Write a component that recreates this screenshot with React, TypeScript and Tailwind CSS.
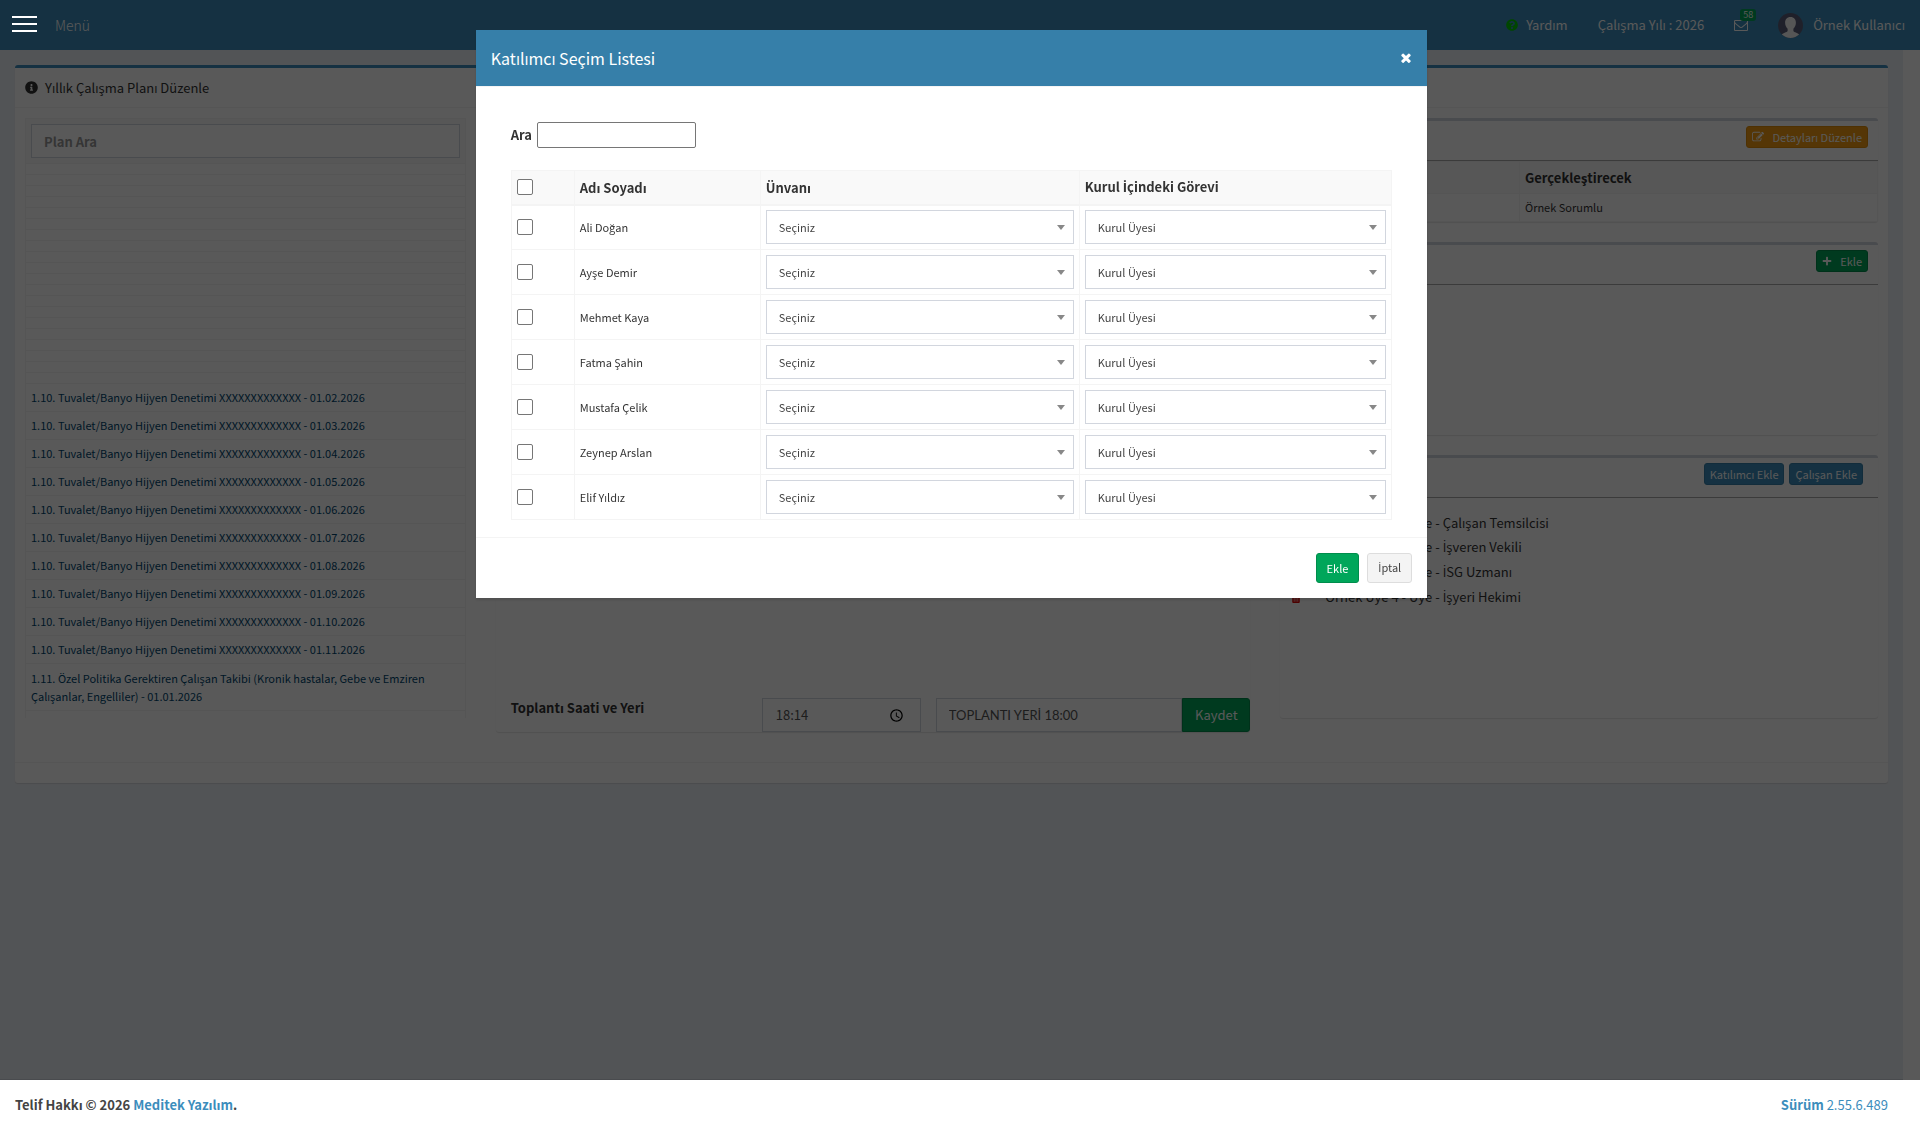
import type { ReactNode } from 'react';
import { FaInfoCircle, FaPlus, FaQuestionCircle, FaTrashAlt } from 'react-icons/fa';

const people = [
  'Ali Doğan',
  'Ayşe Demir',
  'Mehmet Kaya',
  'Fatma Şahin',
  'Mustafa Çelik',
  'Zeynep Arslan',
  'Elif Yıldız',
];

const months = ['02', '03', '04', '05', '06', '07', '08', '09', '10', '11'];

const members = [
  'Örnek Üye 1 - Üye - Çalışan Temsilcisi',
  'Örnek Üye 2 - Üye - İşveren Vekili',
  'Örnek Üye 3 - Üye - İSG Uzmanı',
  'Örnek Üye 4 - Üye - İşyeri Hekimi',
];

// The main font has no dotted capital I, so that letter comes from Open Sans.
function Dotted({ text }: { text: string }) {
  return (
    <span>
      {text.split('İ').map((part, i) => (
        <span key={i}>
          {i > 0 && <span className="font-['Open_Sans',sans-serif]">İ</span>}
          {part}
        </span>
      ))}
    </span>
  );
}

function EnvelopeIcon() {
  return (
    <svg viewBox="0 0 1792 1792" className="size-3.5" fill="currentColor">
      <path d="M1664 1504v-768q-32 36-69 66-268 206-426 338-51 43-83 67t-86.500 48.500-102.500 24.500h-2q-48 0-102.500-24.500t-86.500-48.500-83-67q-158-132-426-338-37-30-69-66v768q0 13 9.500 22.500t22.500 9.500h1472q13 0 22.500-9.500t9.500-22.500zm0-1051v-24.500l-.500-13-3-12.500-5.500-9-9-7.500-14-2.500h-1472q-13 0-22.500 9.500t-9.500 22.500q0 168 147 284 193 152 401 317 6 5 35 29.500t46 37.500 44.500 31.500 50.500 27.500 43 9h2q20 0 43-9t50.500-27.500 44.500-31.500 46-37.500 35-29.500q208-165 401-317 54-43 100.500-115.500t46.500-131.500zm128-37v1088q0 66-47 113t-113 47h-1472q-66 0-113-47t-47-113v-1088q0-66 47-113t113-47h1472q66 0 113 47t47 113z" />
    </svg>
  );
}

function EditIcon() {
  return (
    <svg viewBox="0 0 1792 1792" className="size-3" fill="currentColor">
      <path d="M888 1184l116-116-152-152-116 116v56h96v96h56zm440-720q-16-16-33 1l-350 350q-17 17-1 33t33-1l350-350q17-17 1-33zm80 594v190q0 119-84.500 203.500t-203.500 84.500h-832q-119 0-203.500-84.500t-84.500-203.500v-832q0-119 84.500-203.500t203.500-84.500h832q63 0 117 25 15 7 18 23 3 17-9 29l-49 49q-14 14-32 8-23-6-45-6h-832q-66 0-113 47t-47 113v832q0 66 47 113t113 47h832q66 0 113-47t47-113v-126q0-13 9-22l64-64q15-15 35-7t20 29zm-96-738l288 288-672 672h-288v-288zm444 132l-92 92-288-288 92-92q28-28 68-28t68 28l152 152q28 28 28 68t-28 68z" />
    </svg>
  );
}

function CloseIcon() {
  return (
    <svg viewBox="300 300 1192 1256" className="size-2.5" fill="currentColor">
      <path d="M1490 1322q0 40-28 68l-136 136q-28 28-68 28t-68-28l-294-294-294 294q-28 28-68 28t-68-28l-136-136q-28-28-28-68t28-68l294-294-294-294q-28-28-28-68t28-68l136-136q28-28 68-28t68 28l294 294 294-294q28-28 68-28t68 28l136 136q28 28 28 68t-28 68l-294 294 294 294q28 28 28 68z" />
    </svg>
  );
}

function ClockIcon() {
  return (
    <svg viewBox="0 0 24 24" className="size-[15px] text-black" fill="currentColor">
      <path d="M12 2C6.500 2 2 6.500 2 12s4.500 10 10 10 10-4.500 10-10S17.500 2 12 2zm0 18c-4.400 0-8-3.600-8-8s3.600-8 8-8 8 3.600 8 8-3.600 8-8 8zm.500-13H11v6l5.200 3.200.800-1.300-4.500-2.700V7z" />
    </svg>
  );
}

function Avatar() {
  return (
    <svg viewBox="0 0 25 25" className="size-[25px] rounded-full">
      <rect width="25" height="25" fill="#5b5d78" />
      <path
        d="M12.500 4c-3.600 0-5.400 2.500-5.400 5.700 0 2.400 1 4.600 2.500 6v2.300c-.5 1.400-5.300 1.600-6 4.500L6 25h13l2.500-2.500c-.8-2.900-5.600-3.100-6.100-4.500v-2.300c1.500-1.400 2.500-3.600 2.500-6C17.900 6.500 16.100 4 12.500 4z"
        fill="#f5f5f5"
      />
    </svg>
  );
}

function Header() {
  return (
    <header className="flex h-[50px] items-center justify-between bg-[#3c8dbc] pr-[15px] pl-[55px] text-[13px] text-white">
      <span className="text-sm font-light">Menü</span>
      <nav className="flex items-center">
        <a href="#" className="flex items-center gap-2">
          <FaQuestionCircle className="size-3 text-[#00c800]" />
          Yardım
        </a>
        <a href="#" className="ml-[30px]">
          Çalışma Yılı : 2026
        </a>
        <a href="#" aria-label="Mesajlar" className="relative ml-[30px]">
          <EnvelopeIcon />
          <span className="absolute -top-[9px] left-[6px] h-3 w-4 rounded-[3px] bg-[#00a65a] text-center text-[9px] leading-3">
            58
          </span>
        </a>
        <a href="#" className="ml-[30px] flex items-center gap-2.5">
          <Avatar />
          Örnek Kullanıcı
        </a>
      </nav>
    </header>
  );
}

function PlanList() {
  return (
    <div className="h-[600px] overflow-hidden">
      <table className="w-full border-collapse border border-[#f4f4f4] text-[11px] leading-[17px] text-[#00466e]">
        <thead>
          <tr>
            <th className="bg-[#f9f9f9] px-[5px] py-[5px]">
              <input
                aria-label="Plan Ara"
                placeholder="Plan Ara"
                className="block h-[34px] w-full border border-[#d2d6de] bg-white px-3 text-[13px] font-bold placeholder:text-[#999]"
              />
            </th>
          </tr>
        </thead>
        <tbody>
          {Array.from({ length: 20 }, (_, i) => (
            <tr key={i}>
              <td className="h-[11px] border border-[#f4f4f4] p-0" />
            </tr>
          ))}
          {months.map((m) => (
            <tr key={m}>
              <td className="border border-[#f4f4f4] p-[5px]">
                <a href="#">1.10. Tuvalet/Banyo Hijyen Denetimi XXXXXXXXXXXXX - 01.{m}.2026</a>
              </td>
            </tr>
          ))}
          <tr>
            <td className="border border-[#f4f4f4] p-[5px] leading-[18px]">
              <a href="#">
                1.11. Özel Politika Gerektiren Çalışan Takibi (Kronik hastalar, Gebe ve Emziren Çalışanlar,
                Engelliler) - 01.01.2026
              </a>
            </td>
          </tr>
          <tr>
            <td className="h-[11px] border border-[#f4f4f4] p-0" />
          </tr>
        </tbody>
      </table>
    </div>
  );
}

function MeetingPanel() {
  return (
    <div className="flex h-[614px] flex-col justify-end rounded-[3px] border-t-[3px] border-[#d2d6de] bg-white pl-[15px] shadow-[0_1px_1px_rgba(0,0,0,0.1)]">
      <div className="flex items-center">
        <label htmlFor="time" className="w-[251px] pb-3.5 text-[13px] font-bold text-[#333]">
          Toplantı Saati ve Yeri
        </label>
        <div className="flex h-[34px] w-[159px] items-center justify-between border border-[#d2d6de] pr-4 pl-[13px]">
          <input id="time" defaultValue="18:14" className="w-20 text-[13px] text-[#555]" />
          <ClockIcon />
        </div>
        <input
          aria-label="Toplantı Yeri"
          defaultValue="TOPLANTI YERİ 18:00"
          className="ml-[15px] h-[34px] min-w-0 flex-1 border border-[#d2d6de] px-3 font-['Lato','Open_Sans',sans-serif] text-[13px] text-[#555]"
        />
        <button className="h-[34px] w-[68px] rounded-r-[3px] border border-[#008d4c] bg-[#00a65a] text-[13px] text-white">
          Kaydet
        </button>
      </div>
    </div>
  );
}

type PanelProps = { tools: ReactNode; className: string; children?: ReactNode };

function Panel({ tools, className, children }: PanelProps) {
  return (
    <section
      className={`rounded-[3px] border-t-[3px] border-[#d2d6de] bg-white shadow-[0_1px_1px_rgba(0,0,0,0.1)] ${className}`}
    >
      <div className="flex h-10 justify-end gap-[5px] border-b border-[#a8a8a8] pt-[5px] text-[11px] text-white">
        {tools}
      </div>
      {children}
    </section>
  );
}

function SidePanels() {
  return (
    <div className="flex flex-col gap-5">
      <Panel
        className="h-[104px]"
        tools={
          <button className="mr-2.5 flex h-[22px] items-center gap-2 rounded-[3px] border border-[#e08e0b] bg-[#f39c12] px-[5px]">
            <EditIcon />
            Detayları Düzenle
          </button>
        }
      >
        <table className="w-full border-collapse border border-[#f4f4f4] text-[#333]">
          <thead>
            <tr className="h-8 bg-[#f9f9f9] text-left text-[13px]">
              <th className="w-2/5 border border-[#f4f4f4] p-0" />
              <th className="border border-[#f4f4f4] px-[5px]">Gerçekleştirecek</th>
            </tr>
          </thead>
          <tbody>
            <tr className="h-7 text-[11px]">
              <td className="border border-[#f4f4f4]" />
              <td className="border border-[#f4f4f4] px-[5px]">Örnek Sorumlu</td>
            </tr>
          </tbody>
        </table>
      </Panel>
      <Panel
        className="h-[193px]"
        tools={
          <button className="mr-2.5 flex h-[22px] items-center gap-2 rounded-[3px] border border-[#008d4c] bg-[#00a65a] px-[5px]">
            <FaPlus className="size-2.5" />
            Ekle
          </button>
        }
      />
      <Panel
        className="h-[263px]"
        tools={
          <>
            <button className="h-[22px] rounded-[3px] border border-[#367fa9] bg-[#3c8dbc] px-[5px]">
              Katılımcı Ekle
            </button>
            <button className="mr-[15px] h-[22px] rounded-[3px] border border-[#367fa9] bg-[#3c8dbc] px-[5px]">
              Çalışan Ekle
            </button>
          </>
        }
      >
        <ul className="pt-3 pl-[11px] text-[13px] text-[#333]">
          {members.map((m) => (
            <li key={m} className="flex h-[25px] items-center gap-6">
              <FaTrashAlt className="size-2.5 text-[#dd0000]" />
              <Dotted text={m} />
            </li>
          ))}
        </ul>
      </Panel>
    </div>
  );
}

function SelectBox({ label, value }: { label: string; value: string }) {
  return (
    <div className="relative">
      <select
        aria-label={label}
        className="block h-[34px] w-full appearance-none border border-[#d2d6de] bg-white px-3 text-[11px] text-[#444]"
      >
        <option>{value}</option>
      </select>
      <svg viewBox="0 0 8 5" className="pointer-events-none absolute top-[15px] right-[9px] h-[5px] w-2" fill="#888">
        <path d="M0 0h8L4 5z" />
      </svg>
    </div>
  );
}

const cell = 'border border-[#f4f4f4] px-[5px]';
const headCell = 'border border-b-2 border-[#f4f4f4] px-[5px]';
const box = 'block size-4 appearance-none rounded-[2px] border border-[#767676] bg-white';

function ParticipantDialog() {
  return (
    <div role="dialog" aria-label="Katılımcı Seçim Listesi" className="w-1/2 bg-white shadow-[0_2px_3px_rgba(0,0,0,0.125)]">
      <div className="flex h-14 items-center justify-between bg-[#367fa9] pr-4 pl-[15px] text-white">
        <h4 className="text-base">Katılımcı Seçim Listesi</h4>
        <button aria-label="Kapat">
          <CloseIcon />
        </button>
      </div>
      <div className="border-t border-[#f4f4f4] px-[35px] pt-[35px] pb-[17px]">
        <div className="flex items-center gap-[5px]">
          <label htmlFor="search" className="text-[13px] font-bold">
            Ara
          </label>
          <input id="search" className="h-[26px] w-[159px] rounded-[2px] border border-[#767676] px-1 text-[13px]" />
        </div>
        <table className="mt-[22px] w-full table-fixed border-collapse border border-[#f4f4f4]">
          <colgroup>
            <col className="w-[63px]" />
            <col className="w-[186px]" />
            <col className="w-[319px]" />
            <col />
          </colgroup>
          <thead>
            <tr className="h-[34px] bg-[#f9f9f9] text-left text-[13px]">
              <th className={headCell}>
                <input type="checkbox" aria-label="Tümünü Seç" className={box} />
              </th>
              <th className={headCell}>Adı Soyadı</th>
              <th className={headCell}>Ünvanı</th>
              <th className={headCell}>
                <Dotted text="Kurul İçindeki Görevi" />
              </th>
            </tr>
          </thead>
          <tbody>
            {people.map((name) => (
              <tr key={name} className="h-[45px] text-[11px]">
                <td className={cell}>
                  <input type="checkbox" aria-label={name} className={box} />
                </td>
                <td className={cell}>{name}</td>
                <td className={cell}>
                  <SelectBox label="Ünvanı" value="Seçiniz" />
                </td>
                <td className={cell}>
                  <SelectBox label="Kurul İçindeki Görevi" value="Kurul Üyesi" />
                </td>
              </tr>
            ))}
          </tbody>
        </table>
      </div>
      <div className="flex justify-end gap-2 border-t border-[#f4f4f4] p-[15px] text-[11px]">
        <button className="h-[30px] rounded-[3px] border border-[#008d4c] bg-[#00a65a] px-2.5 text-white">Ekle</button>
        <button className="h-[30px] rounded-[3px] border border-[#ddd] bg-[#f4f4f4] px-2.5 text-[#444]">
          <Dotted text="İptal" />
        </button>
      </div>
    </div>
  );
}

export default function App() {
  return (
    <div className="flex min-h-screen flex-col bg-white font-['Noto_Sans_CJK_SC','Open_Sans',sans-serif] text-[#333]">
      <Header />
      <main className="mr-[17px] flex-1 border-b border-[#d2d6de] bg-[#ecf0f5] p-[15px]">
        <div className="rounded-[3px] border-t-[3px] border-[#3c8dbc] bg-white shadow-[0_1px_1px_rgba(0,0,0,0.1)]">
          <div className="flex h-10 items-center gap-[7px] border-b border-[#f4f4f4] px-2.5">
            <FaInfoCircle className="size-[13px] text-[#333]" />
            <h3 className="text-[13px]">Yıllık Çalışma Planı Düzenle</h3>
          </div>
          <div className="grid h-[654px] grid-cols-12 items-start gap-x-[30px] p-2.5">
            <div className="col-span-3">
              <PlanList />
            </div>
            <div className="col-span-5">
              <MeetingPanel />
            </div>
            <div className="col-span-4">
              <SidePanels />
            </div>
          </div>
          <div className="h-[21px] border-t border-[#f4f4f4]" />
        </div>
      </main>
      <footer className="relative z-20 flex h-[50px] items-center justify-between bg-white pr-8 pl-[15px] text-[13px]">
        <strong className="text-[#444]">
          Telif Hakkı © 2026{' '}
          <a href="#" className="text-[#3c8dbc]">
            Meditek Yazılım
          </a>
          .
        </strong>
        <span className="text-[#3c8dbc]">
          <b>Sürüm</b> 2.55.6.489
        </span>
      </footer>

      <div className="fixed inset-0 z-10 flex items-start justify-center bg-black/65 pt-[30px] pr-[17px]">
        <ParticipantDialog />
      </div>
      <button aria-label="Menü" className="fixed top-4 left-3 z-20 flex w-[25px] flex-col gap-[5px]">
        <span className="h-0.5 bg-white" />
        <span className="h-0.5 bg-white" />
        <span className="h-0.5 bg-white" />
      </button>
    </div>
  );
}
